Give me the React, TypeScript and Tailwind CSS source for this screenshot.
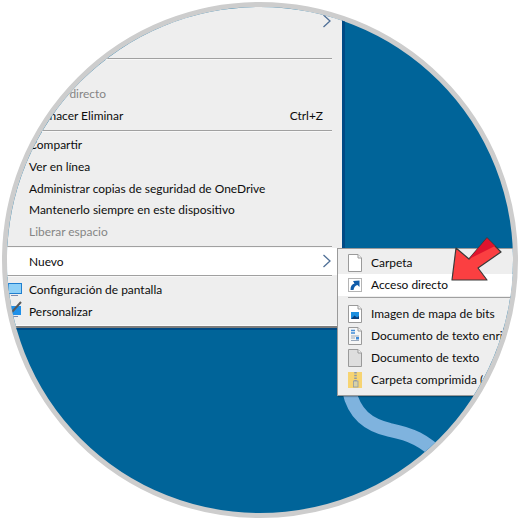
const menuFont = { fontFamily: 'Lato, "Open Sans", sans-serif' };

function Chevron() {
  return (
    <svg width="10" height="14" viewBox="0 0 10 14" fill="none">
      <path d="M1.5 1 L8 7 L1.5 13" stroke="#4f6f96" strokeWidth="1.3" />
    </svg>
  );
}

function Row({ label, muted, shortcut }: { label?: string; muted?: boolean; shortcut?: string }) {
  return (
    <div className="flex h-[21.8px] items-center whitespace-nowrap pl-[22px] pr-[18px]">
      <span className={muted ? "text-[#858585]" : "text-[#0c0c0c]"}>{label}</span>
      {shortcut && <span className="ml-auto mr-[1px] text-[#0c0c0c]">{shortcut}</span>}
    </div>
  );
}

function Separator({ className }: { className: string }) {
  return <div className={`mr-[10px] h-[2px] border-t border-[#a0a0a0] bg-[#f8f8f8] ${className}`} />;
}

function DocIcon({ fill = "#ffffff", children }: { fill?: string; children?: React.ReactNode }) {
  return (
    <svg width="14" height="18" viewBox="0 0 14 18">
      <path d="M0.5 0.5 H10 L13.5 4 V17.5 H0.5 Z" fill={fill} stroke="#9a9a9a" />
      <path d="M10 0.5 V4 H13.5" fill="#f4f4f4" stroke="#9a9a9a" />
      {children}
    </svg>
  );
}

function SubRow({ icon, label, active }: { icon: React.ReactNode; label: string; active?: boolean }) {
  return (
    <div className={`flex h-[22px] items-center ${active ? "bg-white" : ""}`}>
      <div className="flex w-[33px] shrink-0 justify-center">{icon}</div>
      <span className="whitespace-nowrap text-[#0c0c0c]">{label}</span>
    </div>
  );
}

export default function App() {
  return (
    <div className="h-[520px] w-[520px] bg-white p-[2px]" style={menuFont}>
      <div className="relative h-[516px] w-[516px] overflow-hidden rounded-full border-[5px] border-[#cdcdcd] bg-[#006499] text-[11.95px]">
        {/* desktop wallpaper wave */}
        <svg className="absolute inset-0 h-full w-full" viewBox="7 7 506 506" fill="none">
          <path d="M349 390 C354 414 368 425 390 430 C410 434 425 440 442 458" stroke="#7fb3de" strokeWidth="14" />
        </svg>

        <div className="relative flex h-[321px]">
          <div className="w-[335px] bg-[#eeeeee]">
            <div className="relative h-[50.5px]">
              <div className="absolute right-[10px] top-[7px]">
                <Chevron />
              </div>
            </div>
            <Separator className="" />
            <div className="h-[23.5px]" />
            <Row label="Acceso directo" muted />
            <Row label="Deshacer Eliminar" shortcut="Ctrl+Z" />
            <Separator className="mt-[3.4px]" />
            <div className="pt-[2px]">
              <Row label="Compartir" />
              <Row label="Ver en línea" />
              <Row label="Administrar copias de seguridad de OneDrive" />
              <Row label="Mantenerlo siempre en este dispositivo" />
              <Row label="Liberar espacio" muted />
            </div>
            <Separator className="mt-[3px]" />
            <div className="flex h-[27px] items-center justify-between bg-white pl-[22px] pr-[10px]">
              <span className="text-[#0c0c0c]">Nuevo</span>
              <Chevron />
            </div>
            <Separator className="" />
            <div className="relative pt-[2px]">
              <Row label="Configuración de pantalla" />
              <Row label="Personalizar" />
              <svg className="absolute left-[1px] top-[4px]" width="14" height="36" viewBox="0 0 14 36">
                <rect x="0.5" y="2.5" width="13" height="10" fill="#8fd0f7" stroke="#1f7fd0" />
                <rect x="3" y="14" width="7" height="1" fill="#7a8ab0" />
                <rect x="1" y="25" width="12" height="9" fill="#1e90ea" />
                <path d="M4 31 L13 21" stroke="#5a5a5a" strokeWidth="2" />
                <rect x="3" y="35" width="7" height="1" fill="#7a8ab0" />
              </svg>
            </div>
            <div className="mt-[2.4px] h-[1.5px] bg-[#fafafa]" />
            <div className="h-[1.5px] bg-[#7d7d7d]" />
          </div>
          <div className="w-[3px] bg-[#004a85]" />
        </div>
        <div className="h-[2px] w-full bg-[#004a85]" />

        {/* Nuevo submenu */}
        <div className="absolute left-[330px] top-[241px] h-[148px] w-[190px] border border-[#9a9a9a] bg-[#eeeeee] pt-[3px] shadow-[1px_1px_1px_rgba(0,0,0,0.25)]">
          <SubRow label="Carpeta" icon={<DocIcon />} />
          <SubRow
            label="Acceso directo"
            active
            icon={
              <svg width="14" height="14" viewBox="0 0 14 14">
                <rect x="0.5" y="0.5" width="13" height="13" fill="#fff" stroke="#b5b5b5" />
                <path d="M2.5 12 C2.5 8 4 6 6.5 5.5 L5 3 L11.5 2.5 V9 L9.5 7 C7.5 7.5 6 9 5.5 12 Z" fill="#0f5cab" />
              </svg>
            }
          />
          <div className="my-[1px] ml-[10px] h-px bg-[#a0a0a0]" />
          <div className="pt-[4px]">
            <SubRow
              label="Imagen de mapa de bits"
              icon={
                <DocIcon>
                  <rect x="3" y="7" width="8" height="7" fill="#1c8fe0" />
                  <path d="M3 14 L6.5 10.5 L9 12.5 L11 11 V14 Z" fill="#0a3f7e" />
                </DocIcon>
              }
            />
            <SubRow
              label="Documento de texto enriquecido"
              icon={
                <DocIcon fill="#f6f6f6">
                  <path d="M3 3.5 H7 M3 6 H7" stroke="#3f8ad8" strokeWidth="1.4" />
                  <path d="M3 9 H11 M3 11 H7 M3 13.5 H11" stroke="#9aa8ba" strokeWidth="1" />
                  <rect x="8" y="10" width="3" height="2.5" fill="#3f8ad8" />
                </DocIcon>
              }
            />
            <SubRow label="Documento de texto" icon={<DocIcon fill="#dedede" />} />
            <SubRow
              label="Carpeta comprimida (en zip)"
              icon={
                <svg width="14" height="18" viewBox="0 0 14 18">
                  <path d="M0 1 H14 V17 H0 Z" fill="#f7d472" />
                  <path d="M7.5 1 V10" stroke="#8f9aa8" strokeWidth="2.5" strokeDasharray="1.5 1.2" />
                  <rect x="5.5" y="10" width="4.5" height="6" fill="#d8d2a8" stroke="#8f9aa8" strokeWidth="0.8" />
                </svg>
              }
            />
          </div>
        </div>

        {/* red callout arrow */}
        <svg className="absolute inset-0 h-full w-full" viewBox="7 7 506 506">
          <path
            d="M452 280 L456 248 L469 259 L487 238 L501 252 L478 268 L487 280 Z"
            fill="#fb3f41"
            stroke="#3a3a3a"
            strokeWidth="1.2"
            strokeLinejoin="round"
          />
          <path d="M469 259 L487 238 L495 246 Z" fill="#e0142e" />
        </svg>
      </div>
    </div>
  );
}
